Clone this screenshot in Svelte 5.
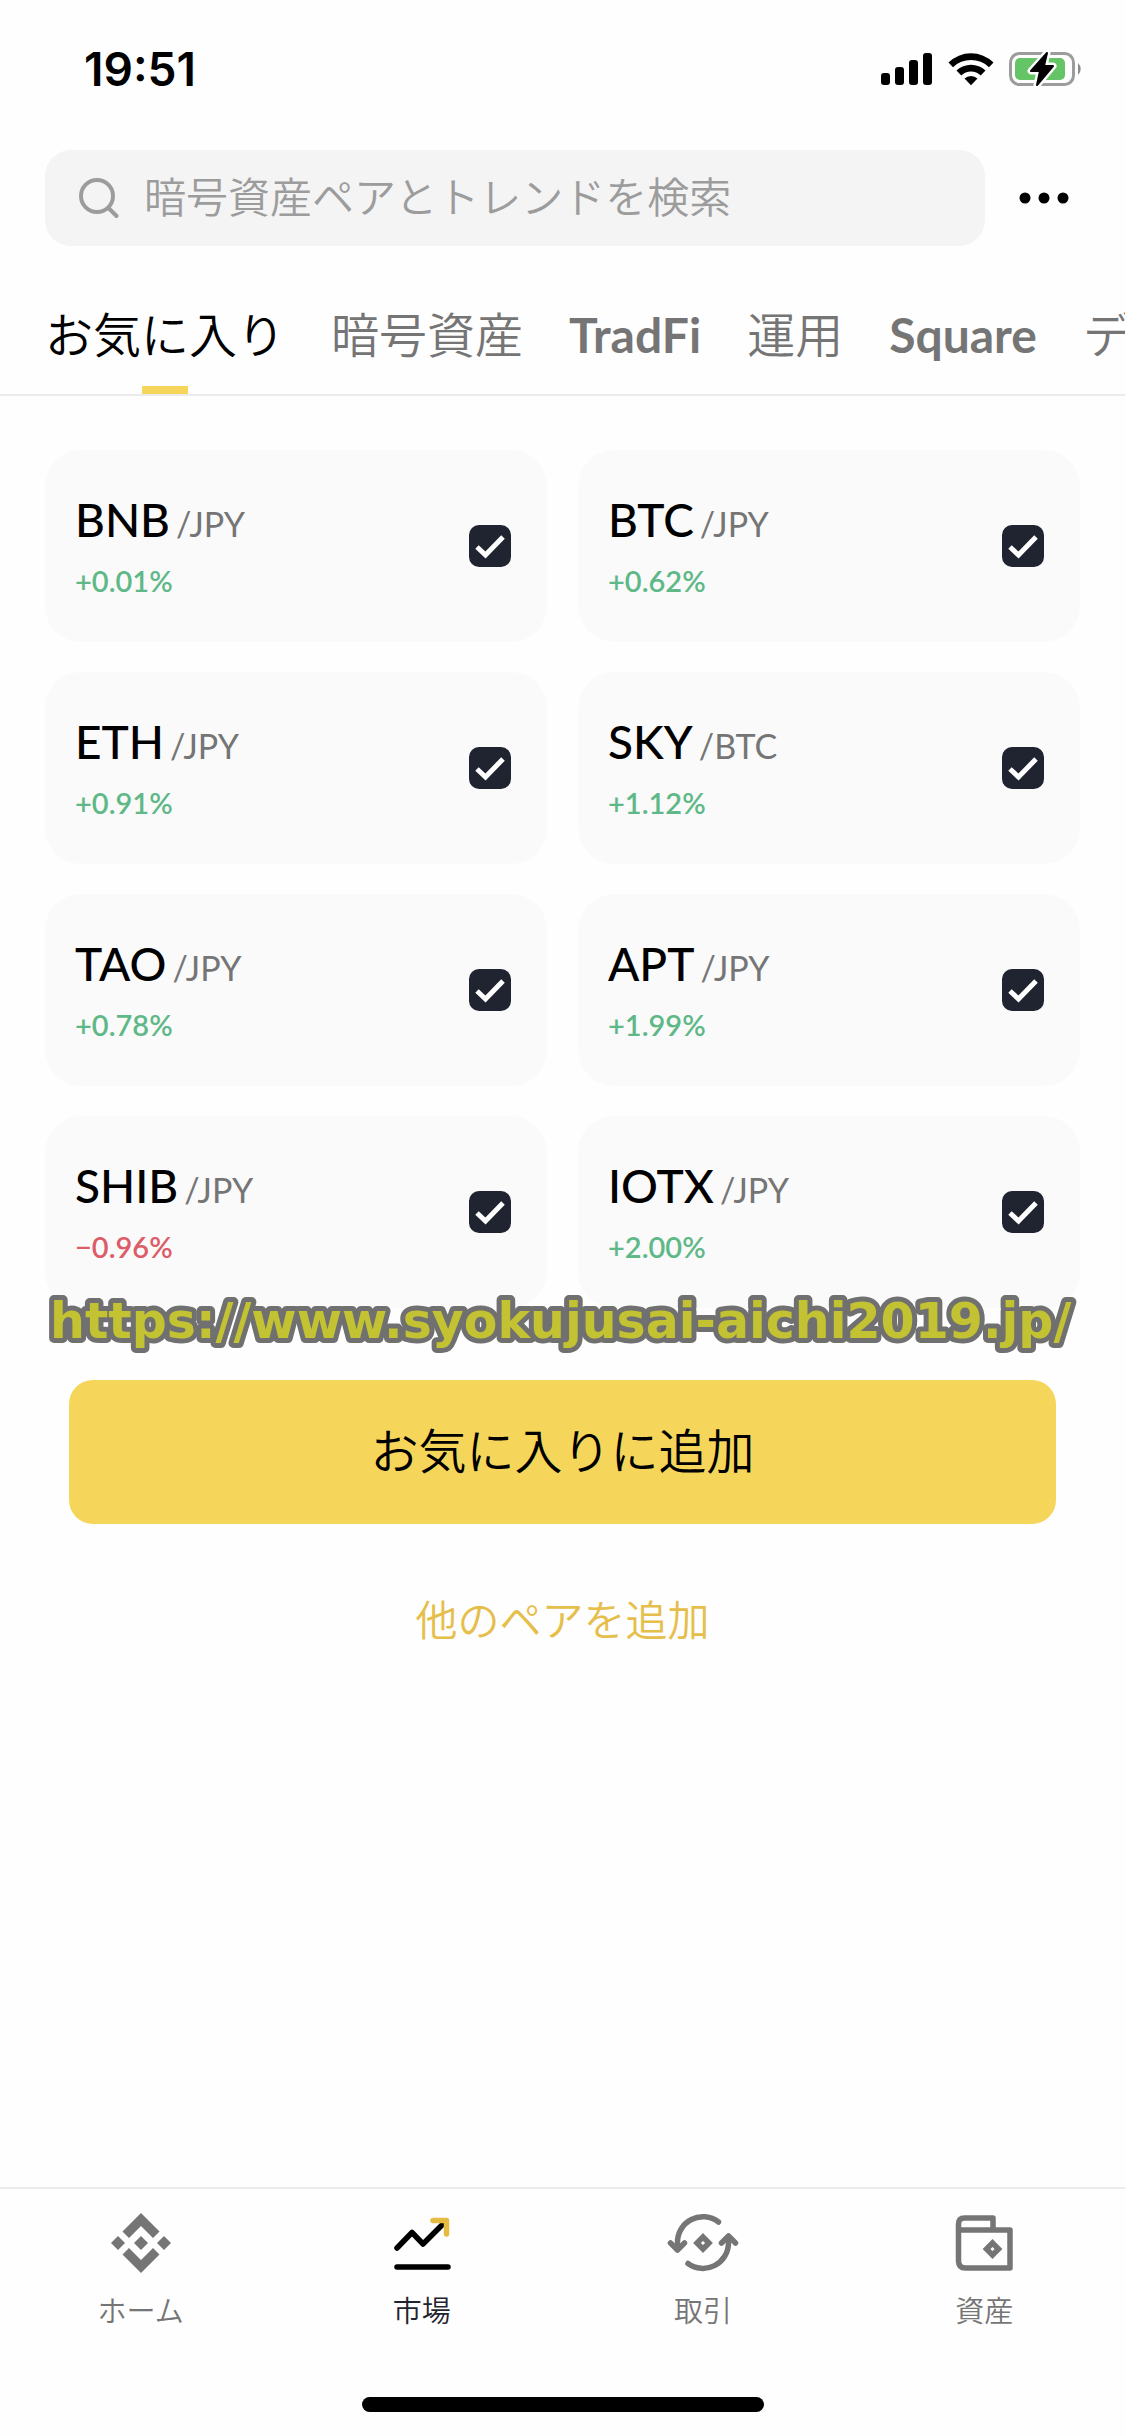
<script lang="ts">
  type Pair = { base: string; quote: string; change: string; picked: boolean };

  let pairs = $state<Pair[]>([
    { base: 'BNB', quote: 'JPY', change: '+0.01%', picked: true },
    { base: 'BTC', quote: 'JPY', change: '+0.62%', picked: true },
    { base: 'ETH', quote: 'JPY', change: '+0.91%', picked: true },
    { base: 'SKY', quote: 'BTC', change: '+1.12%', picked: true },
    { base: 'TAO', quote: 'JPY', change: '+0.78%', picked: true },
    { base: 'APT', quote: 'JPY', change: '+1.99%', picked: true },
    { base: 'SHIB', quote: 'JPY', change: '−0.96%', picked: true },
    { base: 'IOTX', quote: 'JPY', change: '+2.00%', picked: true },
  ]);

  const tabs = [
    { label: 'お気に入り' },
    { label: '暗号資産' },
    { label: 'TradFi', latin: true },
    { label: '運用' },
    { label: 'Square', latin: true },
    { label: 'デ' },
  ];
  let activeTab = $state('お気に入り');
  let query = $state('');
</script>

<div class="screen">
  <div class="status">
    <span class="time">19:51</span>
    <div class="indicators">
      <svg width="52" height="34" viewBox="0 0 52 34" aria-hidden="true">
        <rect x="0" y="21" width="9" height="12" rx="3" />
        <rect x="14" y="15" width="9" height="18" rx="3" />
        <rect x="28" y="8" width="9" height="25" rx="3" />
        <rect x="42" y="1" width="9" height="32" rx="3" />
      </svg>
      <svg width="46" height="34" viewBox="0 0 46 34" aria-hidden="true">
        <path d="M0.500 10.500 A32 32 0 0 1 45.500 10.500 L41 15.200 A26 26 0 0 0 5 15.200 Z" />
        <path d="M8.500 18.500 A21 21 0 0 1 37.500 18.500 L32.700 23.400 A14 14 0 0 0 13.300 23.400 Z" />
        <path d="M16.500 26.600 A9.500 9.500 0 0 1 29.500 26.600 L23 33.200 Z" />
      </svg>
      <svg width="74" height="38" viewBox="0 0 74 38" aria-hidden="true">
        <rect x="1.500" y="3.500" width="63" height="31" rx="9" fill="none" stroke="#9c9c9c" stroke-width="3" />
        <path d="M69 13 a8 8 0 0 1 0 12 Z" fill="#8c8c8c" />
        <rect x="6" y="8" width="50" height="22" rx="5" fill="#65c466" />
        <path
          d="M38 3 L22 21 H31 L28 35 L44 16 H35 Z"
          stroke="#fff"
          stroke-width="7"
          stroke-linejoin="round"
        />
        <path d="M38 3 L22 21 H31 L28 35 L44 16 H35 Z" stroke="#000" stroke-width="2" stroke-linejoin="round" />
      </svg>
    </div>
  </div>

  <header class="top">
    <label class="search">
      <svg width="42" height="42" viewBox="0 0 42 42" fill="none" stroke="#9c9c9c" stroke-width="4" aria-hidden="true">
        <circle cx="19" cy="19" r="16" />
        <path d="M30.500 31 L38.500 39" stroke-linecap="round" />
      </svg>
      <input type="text" bind:value={query} placeholder="暗号資産ペアとトレンドを検索" aria-label="検索" />
    </label>
    <button class="more" aria-label="メニュー">
      <svg width="50" height="12" viewBox="0 0 50 12" aria-hidden="true">
        <circle cx="6" cy="6" r="5.500" />
        <circle cx="25" cy="6" r="5.500" />
        <circle cx="44" cy="6" r="5.500" />
      </svg>
    </button>
  </header>

  <nav class="tabs">
    {#each tabs as tab}
      <button
        class="tab"
        class:latin={tab.latin}
        class:active={tab.label === activeTab}
        onclick={() => (activeTab = tab.label)}>{tab.label}</button
      >
    {/each}
  </nav>

  <main>
    <div class="pairs">
      {#each pairs as pair}
        <label class="card">
          <span class="info">
            <span class="name"><span class="base">{pair.base}</span><span class="quote">/{pair.quote}</span></span>
            <span class="change" class:down={pair.change.startsWith('−')}>{pair.change}</span>
          </span>
          <span class="box">
            <input type="checkbox" bind:checked={pair.picked} />
            <svg viewBox="0 0 42 42" aria-hidden="true">
              <path d="M8 22 L16.500 30 L34 12" fill="none" stroke="#fff" stroke-width="5" />
            </svg>
          </span>
        </label>
      {/each}
      <svg class="watermark" height="60">
        <text x="0" y="46">https://www.syokujusai-aichi2019.jp/</text>
      </svg>
    </div>

    <button class="add">お気に入りに追加</button>
    <button class="other">他のペアを追加</button>
  </main>

  <nav class="bottom">
    <a href="#home">
      <svg width="72" height="60" viewBox="0 0 72 60" fill="#757575" aria-hidden="true">
        <path d="M36 0 L54.500 18.500 L48 25 L36 13 L24 25 L17.500 18.500 Z" />
        <path d="M36 60 L54.500 41.500 L48 35 L36 47 L24 35 L17.500 41.500 Z" />
        <path d="M36 23 L43 30 L36 37 L29 30 Z" />
        <path d="M13 23 L20 30 L13 37 L6 30 Z" />
        <path d="M59 23 L66 30 L59 37 L52 30 Z" />
      </svg>
      <span>ホーム</span>
    </a>
    <a href="#markets" class="current">
      <svg
        width="72"
        height="60"
        viewBox="0 0 72 60"
        fill="none"
        stroke="#000"
        stroke-width="5.500"
        stroke-linecap="round"
        stroke-linejoin="round"
        aria-hidden="true"
      >
        <path d="M11 35 L26 19.500 L37 31 L58 10" />
        <path d="M47 7.500 H60.500 V21" stroke="#e6bb41" />
        <path d="M11 54 H62" />
      </svg>
      <span>市場</span>
    </a>
    <a href="#trade">
      <svg
        width="72"
        height="60"
        viewBox="0 0 72 60"
        fill="none"
        stroke="#757575"
        stroke-width="5.500"
        stroke-linecap="round"
        stroke-linejoin="round"
        aria-hidden="true"
      >
        <path d="M51.500 9 A25.500 25.500 0 0 0 10.500 30 V36" />
        <path d="M3.500 30 L10.500 37 L17.500 30" />
        <path d="M21 50.500 A25.500 25.500 0 0 0 61.500 30 V24" />
        <path d="M54.500 30 L61.500 23 L68.500 30" />
        <path d="M36 24 L42 30 L36 36 L30 30 Z" stroke-linejoin="miter" />
      </svg>
      <span>取引</span>
    </a>
    <a href="#wallet">
      <svg
        width="72"
        height="60"
        viewBox="0 0 72 60"
        fill="none"
        stroke="#757575"
        stroke-width="5.500"
        stroke-linejoin="round"
        aria-hidden="true"
      >
        <path d="M10.500 17 V11 Q10.500 5 16.500 5 H45 V17" />
        <path d="M10.500 17 H62 V55 H17.500 Q10.500 55 10.500 48 Z" />
        <path d="M44.500 30 L50.500 36 L44.500 42 L38.500 36 Z" stroke-linejoin="miter" />
      </svg>
      <span>資産</span>
    </a>
  </nav>
  <div class="home-bar"></div>
</div>

<style>
  :global(body) {
    background: #fefefe;
  }

  .screen {
    display: flex;
    flex-direction: column;
    min-height: 100vh;
    overflow: hidden;
    font-family: Lato, 'Noto Sans CJK JP', sans-serif;
    color: #000;
  }

  button {
    padding: 0;
    border: none;
    background: none;
    font: inherit;
    color: inherit;
  }

  .status {
    display: flex;
    align-items: center;
    justify-content: space-between;
    height: 138px;
    padding: 0 42px 0 84px;
    box-sizing: border-box;
  }

  .time {
    font-family: Inter, sans-serif;
    font-size: 46px;
    font-weight: 600;
  }

  .indicators {
    display: flex;
    align-items: center;
    gap: 15px;
  }

  .top {
    display: flex;
    align-items: center;
    gap: 34px;
    margin-top: 12px;
    padding: 0 56px 0 45px;
  }

  .search {
    display: flex;
    flex: 1;
    align-items: center;
    gap: 24px;
    height: 96px;
    padding: 0 33px;
    box-sizing: border-box;
    border-radius: 26px;
    background: #f4f4f4;
  }

  .search input {
    flex: 1;
    min-width: 0;
    padding: 0 0 6px;
    border: none;
    outline: none;
    background: none;
    font: 350 42px/60px 'Noto Sans CJK JP', sans-serif;
  }

  .search input::placeholder {
    color: #9c9c9c;
    opacity: 1;
  }

  .more {
    display: flex;
  }

  .tabs {
    display: flex;
    gap: 46px;
    height: 150px;
    padding-left: 45px;
    box-sizing: border-box;
    border-bottom: 2px solid #ebebeb;
    overflow: hidden;
  }

  .tab {
    position: relative;
    padding-top: 30px;
    font-size: 48px;
    line-height: 72px;
    font-weight: 350;
    white-space: nowrap;
    color: #757575;
  }

  .tab.latin {
    font-weight: 700;
  }

  .tab.active {
    color: #000;
  }

  .tab.active::after {
    content: '';
    position: absolute;
    bottom: 0;
    left: calc(50% - 23px);
    width: 46px;
    height: 8px;
    background: #f5d65a;
  }

  main {
    display: flex;
    flex: 1;
    flex-direction: column;
    align-items: stretch;
  }

  .pairs {
    position: relative;
    display: grid;
    grid-template-columns: 1fr 1fr;
    gap: 30px 31px;
    padding: 54px 45px 0;
  }

  .card {
    display: flex;
    align-items: center;
    justify-content: space-between;
    height: 192px;
    padding: 0 36px 0 30px;
    box-sizing: border-box;
    border-radius: 36px;
    background: #fafafa;
  }

  .info {
    display: flex;
    flex-direction: column;
    gap: 4px;
  }

  .name {
    line-height: 54px;
  }

  .base {
    font-family: 'Lato Medium', Lato, sans-serif;
    font-size: 46px;
    font-weight: 500;
  }

  .quote {
    margin-left: 6px;
    font-size: 34px;
    font-weight: 400;
    color: #757575;
  }

  .change {
    font-family: 'Lato Semibold', 'Lato Medium', Lato, sans-serif;
    font-size: 29px;
    line-height: 38px;
    font-weight: 600;
    color: #5fb887;
  }

  .change.down {
    color: #dc5c68;
  }

  .box {
    position: relative;
    display: flex;
  }

  .box input {
    width: 42px;
    height: 42px;
    margin: 0;
    appearance: none;
    border-radius: 10px;
    border: 3px solid #1f2430;
  }

  .box input:checked {
    background: #1f2430;
  }

  .box svg {
    position: absolute;
    inset: 0;
    pointer-events: none;
  }

  .watermark {
    position: absolute;
    left: 50px;
    bottom: -44px;
    width: calc(100% - 100px);
    overflow: visible;
    pointer-events: none;
  }

  .watermark text {
    font-family: 'DejaVu Sans', Verdana, sans-serif;
    font-size: 49px;
    font-weight: 700;
    fill: #c2c232;
    stroke: #707070;
    stroke-width: 10px;
    stroke-linejoin: round;
    paint-order: stroke fill;
  }

  .add {
    height: 144px;
    margin: 72px 69px 0;
    padding-bottom: 8px;
    border-radius: 24px;
    background: #f5d65a;
    font-size: 48px;
    font-weight: 350;
  }

  .other {
    align-self: center;
    margin-top: 66px;
    font-size: 42px;
    line-height: 60px;
    font-weight: 350;
    color: #e6be4b;
  }

  .bottom {
    display: grid;
    grid-template-columns: repeat(4, 1fr);
    border-top: 2px solid #ebebeb;
    padding: 24px 0 64px;
  }

  .bottom a {
    display: flex;
    flex-direction: column;
    align-items: center;
    gap: 16px;
    font-size: 29px;
    line-height: 44px;
    font-weight: 350;
    text-decoration: none;
    color: #757575;
  }

  .bottom .current {
    color: #1f2430;
  }

  .home-bar {
    align-self: center;
    width: 402px;
    height: 15px;
    margin-bottom: 24px;
    border-radius: 8px;
    background: #000;
  }
</style>
